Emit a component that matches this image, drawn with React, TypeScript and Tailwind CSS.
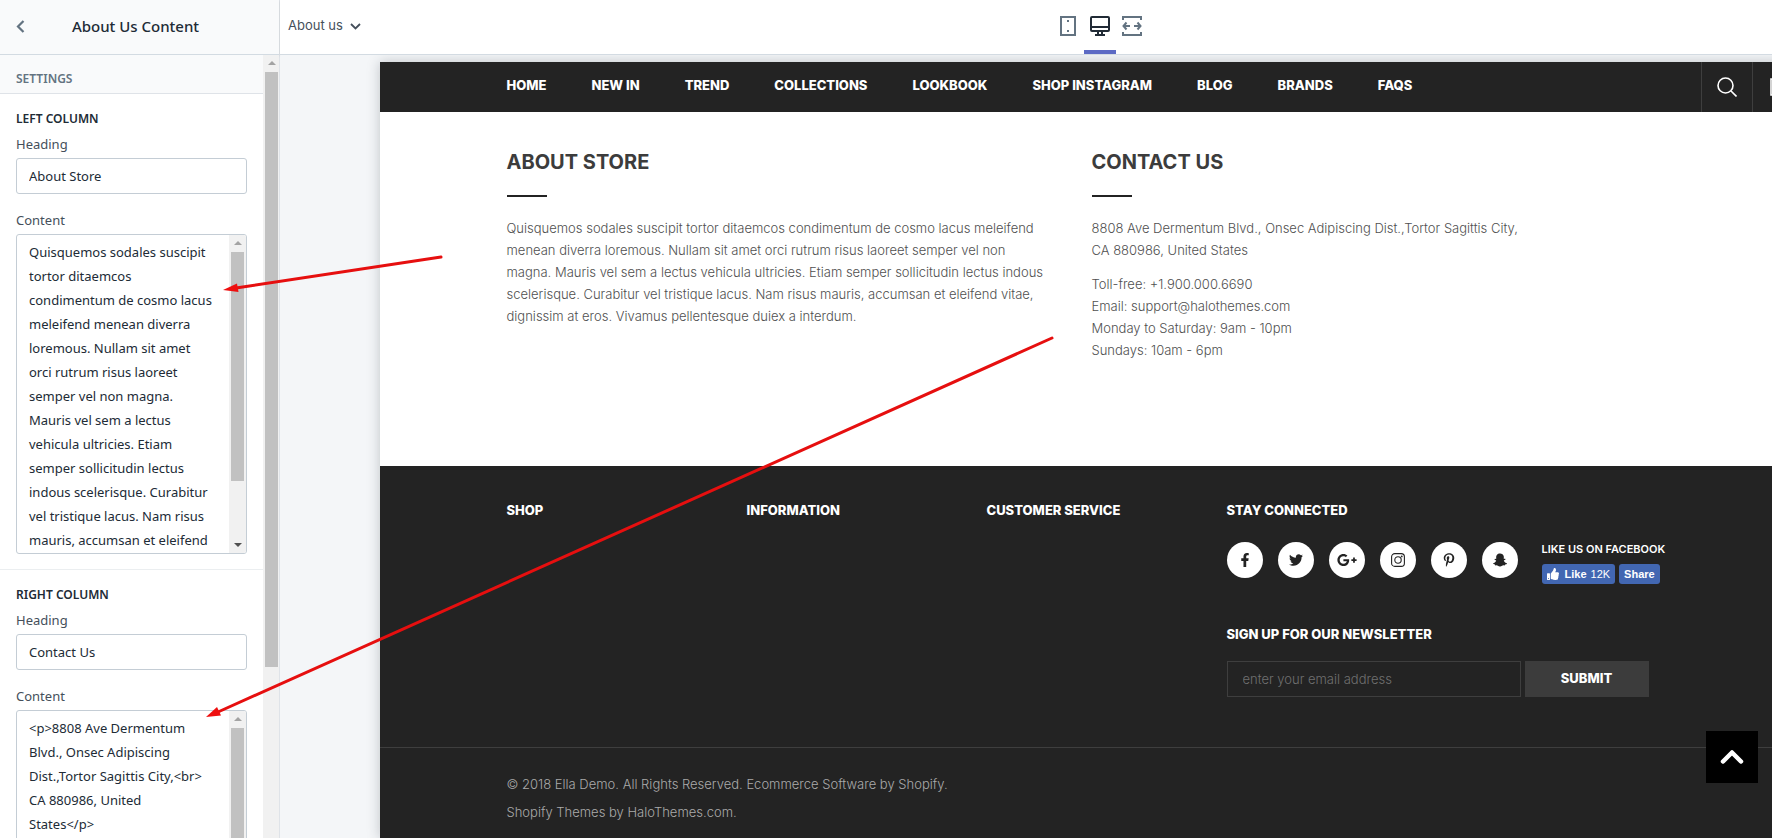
import React from "react";
import {
  FaFacebookF,
  FaTwitter,
  FaGooglePlusG,
  FaPinterestP,
  FaSnapchatGhost,
  FaThumbsUp,
} from "react-icons/fa";

const navLinks = ["HOME", "NEW IN", "TREND", "COLLECTIONS", "LOOKBOOK", "SHOP INSTAGRAM", "BLOG", "BRANDS", "FAQS"];

const socials = [
  { label: "Facebook", Icon: FaFacebookF },
  { label: "Twitter", Icon: FaTwitter },
  { label: "Google Plus", Icon: FaGooglePlusG },
  { label: "Instagram", Icon: InstagramOutline },
  { label: "Pinterest", Icon: FaPinterestP },
  { label: "Snapchat", Icon: FaSnapchatGhost },
];

const aboutLines = [
  "Quisquemos sodales suscipit tortor ditaemcos condimentum de cosmo lacus meleifend",
  "menean diverra loremous. Nullam sit amet orci rutrum risus laoreet semper vel non",
  "magna. Mauris vel sem a lectus vehicula ultricies. Etiam semper sollicitudin lectus indous",
  "scelerisque. Curabitur vel tristique lacus. Nam risus mauris, accumsan et eleifend vitae,",
  "dignissim at eros. Vivamus pellentesque duiex a interdum.",
];

const aboutSource = `Quisquemos sodales suscipit
tortor ditaemcos
condimentum de cosmo lacus
meleifend menean diverra
loremous. Nullam sit amet
orci rutrum risus laoreet
semper vel non magna.
Mauris vel sem a lectus
vehicula ultricies. Etiam
semper sollicitudin lectus
indous scelerisque. Curabitur
vel tristique lacus. Nam risus
mauris, accumsan et eleifend
vitae, dignissim at eros.`;

const contactSource = `<p>8808 Ave Dermentum
Blvd., Onsec Adipiscing
Dist.,Tortor Sagittis City,<br>
CA 880986, United
States</p>
<p>Toll-free:
+1.900.000.6690<br>`;

function InstagramOutline({ className }: { className?: string }) {
  return (
    <svg className={className} viewBox="0 0 14 14" fill="none" stroke="currentColor" strokeWidth="1.100">
      <rect x="0.600" y="0.600" width="12.800" height="12.800" rx="3.200" />
      <circle cx="7" cy="7" r="3.200" />
      <circle cx="10.700" cy="3.400" r="0.400" />
    </svg>
  );
}

function ScrollArrow({ down = false, dark = false }: { down?: boolean; dark?: boolean }) {
  return (
    <svg width="17" height="17" viewBox="0 0 17 17" className="shrink-0" fill={dark ? "#505050" : "#a3a3a3"}>
      {down ? <path d="M5 7h8l-4 4z" /> : <path d="M5 10h8L9 6z" />}
    </svg>
  );
}

function TextField({ id, label, value }: { id: string; label: string; value: string }) {
  return (
    <div>
      <label htmlFor={id} className="block text-[13px] leading-6 text-[#454f5b]">
        {label}
      </label>
      <input
        id={id}
        defaultValue={value}
        className="mt-0.5 block h-9 w-full rounded-[3px] border border-[#c4cdd5] bg-white px-3 text-[13px] text-[#212b36] outline-none"
      />
    </div>
  );
}

function TextAreaField({ id, label, value, thumb }: { id: string; label: string; value: string; thumb: string }) {
  return (
    <div className="mt-3.5">
      <label htmlFor={id} className="block text-[13px] leading-6 text-[#454f5b]">
        {label}
      </label>
      <div className="mt-0.5 flex h-80 overflow-hidden rounded-[3px] border border-[#c4cdd5] bg-white">
        <textarea
          id={id}
          defaultValue={value}
          className="block h-full min-w-0 flex-1 resize-none pt-[5px] pl-3 text-[13px] leading-6 text-[#212b36] outline-none [scrollbar-width:none]"
        />
        <div className="flex w-[17px] shrink-0 flex-col bg-[#f1f1f1]">
          <ScrollArrow />
          <div className={`mx-0.5 bg-[#c1c1c1] ${thumb}`} />
          <div className="flex-1" />
          <ScrollArrow down dark />
        </div>
      </div>
    </div>
  );
}

function SectionTitle({ children }: { children: React.ReactNode }) {
  return <h3 className="mb-px text-xs leading-6 font-semibold text-[#212b36]">{children}</h3>;
}

function Sidebar() {
  return (
    <aside className="flex w-[280px] shrink-0 flex-col border-r border-[#dfe3e8] bg-white font-['Noto_Sans',sans-serif]">
      <header className="flex h-[55px] shrink-0 items-center border-b border-[#d3dbe2] bg-[#f9fafb] pb-0.5 pl-3 shadow-sm">
        <button aria-label="Back" className="flex size-4 items-center justify-center">
          <svg width="9" height="13" viewBox="0 0 9 13" fill="none" stroke="#637381" strokeWidth="2.2">
            <path d="M7.5 1 2 6.5 7.5 12" />
          </svg>
        </button>
        <h1 className="flex-1 pr-9 text-center text-[15px] font-medium text-[#212b36]">About Us Content</h1>
      </header>
      <div className="flex min-h-0 flex-1">
        <div className="min-w-0 flex-1 overflow-hidden">
          <h2 className="border-b border-[#dfe3e8] bg-[#f9fafb] px-4 pt-3 pb-0.5 text-xs leading-6 font-semibold text-[#637381]">
            SETTINGS
          </h2>
          <section className="px-4 pt-[13px] pb-[15px]">
            <SectionTitle>LEFT COLUMN</SectionTitle>
            <TextField id="left-heading" label="Heading" value="About Store" />
            <TextAreaField id="left-content" label="Content" value={aboutSource} thumb="h-[229px]" />
          </section>
          <section className="border-t border-[#ebeef0] px-4 pt-[13px] pb-[15px]">
            <SectionTitle>RIGHT COLUMN</SectionTitle>
            <TextField id="right-heading" label="Heading" value="Contact Us" />
            <TextAreaField id="right-content" label="Content" value={contactSource} thumb="h-[229px]" />
          </section>
        </div>
        <div className="flex w-4 shrink-0 flex-col items-center bg-[#f1f1f1]">
          <ScrollArrow />
          <div className="h-[76%] w-[13px] bg-[#c1c1c1]" />
        </div>
      </div>
    </aside>
  );
}

function TopBar() {
  return (
    <header className="grid h-[55px] shrink-0 grid-cols-[1fr_auto_1fr] border-b border-[#d3dbe2] bg-white">
      <button className="flex items-center gap-[7px] justify-self-start pb-0.5 pl-2 text-[13px] text-[#454f5b]">
        About us
        <svg width="11" height="7" viewBox="0 0 11 7" fill="none" stroke="#454f5b" strokeWidth="1.8">
          <path d="M1 1l4.500 4.500L10 1" />
        </svg>
      </button>
      <div className="flex">
        <button aria-label="Mobile view" className="flex w-8 items-center justify-center border-b-4 border-transparent pt-0.5">
          <svg width="16" height="20" viewBox="0 0 16 20" fill="none" stroke="#637381" strokeWidth="2">
            <path d="M1 1h14v18H1z" />
            <path d="M7 5h2M7 15h2" />
          </svg>
        </button>
        <button aria-label="Desktop view" className="flex w-8 items-center justify-center border-b-4 border-[#5c6ac4] pt-0.5">
          <svg width="20" height="20" viewBox="0 0 20 20" fill="none" stroke="#212b36" strokeWidth="2">
            <rect x="1" y="1" width="18" height="14" rx="1" />
            <path d="M1 11h18M8 15v3M12 15v3M5 19h10" />
          </svg>
        </button>
        <button aria-label="Full width view" className="flex w-8 items-center justify-center border-b-4 border-transparent pt-0.5">
          <svg width="20" height="20" viewBox="0 0 20 20" fill="none" stroke="#637381" strokeWidth="2">
            <path d="M1 4V1h18v3M1 16v3h18v-3M1.500 10H8M12 10h6.500M4.500 6.500 1.500 10l3 3.500M15.500 6.500l3 3.500-3 3.500" />
          </svg>
        </button>
      </div>
      <span />
    </header>
  );
}

function StoreNav() {
  return (
    <nav className="flex h-[50px] bg-[#232323] text-white">
      <div className="flex-1" />
      <ul className="flex w-[1170px] gap-[45px] text-[13px] leading-[47px] font-extrabold">
        {navLinks.map((l) => (
          <li key={l} className="whitespace-nowrap">
            <a href="#">{l}</a>
          </li>
        ))}
      </ul>
      <div className="flex flex-1 justify-end">
        <button aria-label="Search" className="flex w-[51px] items-center justify-center border-l border-[#3e3e3e]">
          <svg width="20" height="20" viewBox="0 0 20 20" fill="none" stroke="#fff" strokeWidth="1.600">
            <circle cx="8.500" cy="8.500" r="7.500" />
            <path d="M14 14l5.500 5.500" />
          </svg>
        </button>
        <button aria-label="Cart" className="flex w-[51px] items-center border-l border-[#3e3e3e] pl-[17px]">
          <svg width="18" height="18" viewBox="0 0 18 18" fill="none" stroke="#fff" strokeWidth="1.600">
            <path d="M1 1h16v16H1z" />
          </svg>
        </button>
      </div>
    </nav>
  );
}

function ColumnTitle({ children }: { children: React.ReactNode }) {
  return (
    <>
      <h2 className="text-xl leading-[26px] font-bold text-[#3c3c3c]">{children}</h2>
      <div className="mt-5 mb-5 h-0.5 w-10 bg-[#232323]" />
    </>
  );
}

function StoreContent() {
  return (
    <main className="mx-auto grid h-[354px] w-[1170px] grid-cols-2 pt-[37px] text-[13px] leading-[22px] font-light text-[#505050]">
      <section className="pr-6">
        <ColumnTitle>ABOUT STORE</ColumnTitle>
        <p>
          {aboutLines.map((line) => (
            <React.Fragment key={line}>
              {line}
              <br />
            </React.Fragment>
          ))}
        </p>
      </section>
      <section>
        <ColumnTitle>CONTACT US</ColumnTitle>
        <p>
          8808 Ave Dermentum Blvd., Onsec Adipiscing Dist.,Tortor Sagittis City,
          <br />
          CA 880986, United States
        </p>
        <p className="mt-3">
          Toll-free: +1.900.000.6690
          <br />
          Email: support@halothemes.com
          <br />
          Monday to Saturday: 9am - 10pm
          <br />
          Sundays: 10am - 6pm
        </p>
      </section>
    </main>
  );
}

function FooterTitle({ children }: { children: React.ReactNode }) {
  return <h3 className="text-[13px] leading-5 font-extrabold text-white">{children}</h3>;
}

function StoreFooter() {
  return (
    <footer className="flex-1 bg-[#232323] text-white">
      <div className="mx-auto grid h-[281px] w-[1170px] grid-cols-[240px_240px_240px_450px] pt-[34px]">
        <FooterTitle>SHOP</FooterTitle>
        <FooterTitle>INFORMATION</FooterTitle>
        <FooterTitle>CUSTOMER SERVICE</FooterTitle>
        <div>
          <FooterTitle>STAY CONNECTED</FooterTitle>
          <div className="mt-[22px] flex h-[42px]">
            <ul className="flex gap-[15px]">
              {socials.map(({ label, Icon }) => (
                <li key={label}>
                  <a
                    href="#"
                    aria-label={label}
                    className="flex size-9 items-center justify-center rounded-full bg-white text-[#232323]"
                  >
                    <Icon className={label === "Google Plus" ? "size-5" : "size-3.5"} />
                  </a>
                </li>
              ))}
            </ul>
            <div className="ml-6">
              <p className="text-[11px] leading-[15px] font-semibold">LIKE US ON FACEBOOK</p>
              <div className="mt-[7px] flex gap-1 font-['Liberation_Sans',sans-serif] text-[11px] font-bold">
                <button className="flex h-5 items-center gap-1 rounded-[3px] bg-[#4267b2] px-[5px]">
                  <FaThumbsUp className="mr-0.5 size-3" />
                  Like <span className="font-normal">12K</span>
                </button>
                <button className="h-5 rounded-[3px] bg-[#4267b2] px-[5px]">Share</button>
              </div>
            </div>
          </div>
          <form className="mt-10" onSubmit={(e) => e.preventDefault()}>
            <label htmlFor="newsletter" className="block text-[13px] leading-5 font-extrabold">
              SIGN UP FOR OUR NEWSLETTER
            </label>
            <div className="mt-[17px] flex gap-1">
              <input
                id="newsletter"
                type="email"
                placeholder="enter your email address"
                className="h-9 w-[294px] border border-[#3e3e3e] bg-transparent px-[15px] text-[13px] font-light outline-none placeholder:text-[#707070]"
              />
              <button className="h-9 w-[124px] bg-[#3c3c3c] text-[13px] font-extrabold">SUBMIT</button>
            </div>
          </form>
        </div>
      </div>
      <div className="border-t border-[#3e3e3e] pt-[22px]">
        <div className="mx-auto w-[1170px] text-[13px] leading-7 font-light text-[#aaaaaa]">
          <p>© 2018 Ella Demo. All Rights Reserved. Ecommerce Software by Shopify.</p>
          <p>Shopify Themes by HaloThemes.com.</p>
        </div>
      </div>
    </footer>
  );
}

export default function App() {
  return (
    <div className="relative flex h-screen overflow-hidden bg-[#f4f6f8]">
      <Sidebar />
      <div className="-mr-[148px] flex min-w-0 flex-1 flex-col font-['Inter',sans-serif]">
        <TopBar />
        <div className="flex min-h-0 flex-1 flex-col overflow-hidden px-[100px] pt-[7px]">
          <div className="flex flex-1 flex-col bg-white pr-[17px] shadow-[0_0_12px_rgba(33,43,54,0.25)]">
            <StoreNav />
            <StoreContent />
            <StoreFooter />
          </div>
        </div>
      </div>

      <button
        aria-label="Back to top"
        className="absolute right-3.5 bottom-[55px] flex size-[52px] items-center justify-center bg-black"
      >
        <svg width="24" height="16" viewBox="0 0 24 16" fill="none" stroke="#fff" strokeWidth="4.500" strokeLinecap="round" strokeLinejoin="round">
          <path d="M3 12.500 12 3.500l9 9" />
        </svg>
      </button>

      <svg className="pointer-events-none absolute top-0 left-0" width="1772" height="838" viewBox="0 0 1772 838" stroke="#e60f0f" strokeWidth="3" fill="#ee0f0f">
        <path d="M441 257 236 288" strokeLinecap="round" />
        <path d="M223 290l14-6.500 1.500 8.500z" stroke="none" />
        <path d="M1052 338 218 712" strokeLinecap="round" />
        <path d="M206 717l11-10 4 8.500z" stroke="none" />
      </svg>
    </div>
  );
}
